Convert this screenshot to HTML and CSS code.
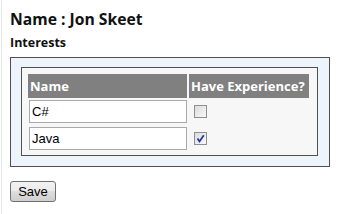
FILE: index.html
```html
<!DOCTYPE html>
<html lang="en">
<head>
    <meta charset="UTF-8">
    <title>Interests</title>
    <link rel="stylesheet" href="styles.css">
</head>
<body>
    <div class="page">
        <h2 class="person">Name : Jon Skeet</h2>
        <h3 class="section">Interests</h3>
        <div class="outer-box">
            <div class="inner-box">
                <table class="interests">
                    <thead>
                        <tr>
                            <th class="col-name">Name</th>
                            <th class="col-exp">Have Experience?</th>
                        </tr>
                    </thead>
                    <tbody>
                        <tr>
                            <td><input type="text" class="name-input" value="C#"></td>
                            <td class="check-cell"><span class="check"></span></td>
                        </tr>
                        <tr>
                            <td><input type="text" class="name-input" value="Java"></td>
                            <td class="check-cell">
                                <span class="check">
                                    <svg width="11" height="11" viewBox="0 0 11 11">
                                        <path d="M2.5 5.5 L4.5 8.5 L8.8 2.2" fill="none" stroke="#1d3c9a" stroke-width="1.8"/>
                                    </svg>
                                </span>
                            </td>
                        </tr>
                    </tbody>
                </table>
            </div>
        </div>
        <button class="save-btn">Save</button>
    </div>
</body>
</html>
```

FILE: styles.css
```css
body {
    margin: 0;
    background-color: #ffffff;
    font-family: "Liberation Sans", Arial, sans-serif;
}

.page {
    margin-left: 1px;
    border-left: 1px solid #e6e6e6;
    height: 214px;
    padding-left: 7px;
    padding-top: 8px;
    box-sizing: border-box;
}

.person {
    font-family: "Open Sans", sans-serif;
    font-weight: bold;
    font-size: 15.7px;
    color: #111111;
    margin: 0 0 0 1px;
    line-height: 22px;
}

.section {
    font-family: "Open Sans", sans-serif;
    font-weight: bold;
    font-size: 12.5px;
    color: #111111;
    margin: 4px 0 0 1px;
    line-height: 18px;
}

.outer-box {
    margin-top: 5px;
    margin-left: 1px;
    width: 320px;
    box-sizing: border-box;
    border: 1px solid #505050;
    background-color: #eef4fc;
    padding: 9px 11px 10px 10px;
}

.inner-box {
    border: 1px solid #505050;
    background-color: #f7f7f7;
    padding: 4px 4px 1px 4px;
}

.interests {
    border-spacing: 2px;
}

.interests th {
    background-color: #808080;
    color: #ffffff;
    font-family: "Open Sans", sans-serif;
    font-weight: bold;
    font-size: 13px;
    text-align: left;
    height: 24px;
    padding: 0 1px 0 2px;
    white-space: nowrap;
}

.col-name {
    width: 155px;
}

.col-exp {
    width: 117px;
}

.interests td {
    padding: 0 0 2px 1px;
    vertical-align: top;
}

.name-input {
    width: 158px;
    height: 23px;
    box-sizing: border-box;
    border: 1px solid #a9a9a9;
    font-family: "Liberation Sans", Arial, sans-serif;
    font-size: 13px;
    padding: 0 2px;
    margin: 0;
    color: #000000;
    background-color: #ffffff;
}

.check-cell {
    padding-left: 5px !important;
}

.check {
    display: block;
    width: 13px;
    height: 13px;
    box-sizing: border-box;
    margin-top: 5px;
    border: 1px solid #8e8f8f;
    background: linear-gradient(135deg, #dcdcdc, #f8f8f8);
}

.check svg {
    display: block;
}

.save-btn {
    margin-top: 14px;
    margin-left: 1px;
    width: 46px;
    height: 21px;
    border: 1px solid #707070;
    border-radius: 3px;
    background: linear-gradient(#f2f2f2, #ebebeb 50%, #dddddd 50%, #cfcfcf);
    font-family: "Liberation Sans", Arial, sans-serif;
    font-size: 13px;
    color: #000000;
    padding: 0;
}
```
